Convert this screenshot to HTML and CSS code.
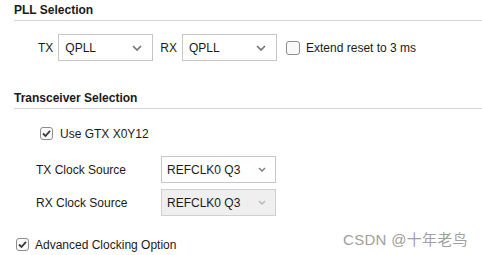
FILE: index.html
```html
<!DOCTYPE html>
<html lang="en">
<head>
  <meta charset="UTF-8" />
  <title>Transceiver Options</title>
  <link rel="stylesheet" href="styles.css">
</head>
<body>

  <div class="section">
    <h2 class="heading">PLL Selection</h2>
    <div class="pll-row">
      <span class="lbl-tx">TX</span>
      <div class="combo combo-pll">
        <span>QPLL</span>
        <svg class="chev" width="10" height="6" viewBox="0 0 10 6"><path d="M1 1 L5 5 L9 1" fill="none" stroke="#707070" stroke-width="1.6"/></svg>
      </div>
      <span class="lbl-rx">RX</span>
      <div class="combo combo-pll">
        <span>QPLL</span>
        <svg class="chev" width="10" height="6" viewBox="0 0 10 6"><path d="M1 1 L5 5 L9 1" fill="none" stroke="#707070" stroke-width="1.6"/></svg>
      </div>
      <span class="check check-extend"></span>
      <span>Extend reset to 3 ms</span>
    </div>
  </div>

  <div class="section section-trx">
    <h2 class="heading">Transceiver Selection</h2>
    <div class="check-row gtx-row">
      <span class="check">
        <svg width="11" height="11" viewBox="0 0 11 11"><path d="M2 5.5 L4.5 8 L9 2.8" fill="none" stroke="#3a3a3a" stroke-width="1.8"/></svg>
      </span>
      <span>Use GTX X0Y12</span>
    </div>
    <div class="clock-grid">
      <span>TX Clock Source</span>
      <div class="combo combo-clk">
        <span>REFCLK0 Q3</span>
        <svg class="chev" width="8" height="5" viewBox="0 0 8 5"><path d="M1 1 L4 4 L7 1" fill="none" stroke="#808080" stroke-width="1.5"/></svg>
      </div>
      <span>RX Clock Source</span>
      <div class="combo combo-clk combo-disabled">
        <span>REFCLK0 Q3</span>
        <svg class="chev" width="8" height="5" viewBox="0 0 8 5"><path d="M1 1 L4 4 L7 1" fill="none" stroke="#b8b8b8" stroke-width="1.5"/></svg>
      </div>
    </div>
  </div>

  <div class="check-row adv-row">
    <span class="check">
      <svg width="11" height="11" viewBox="0 0 11 11"><path d="M2 5.5 L4.5 8 L9 2.8" fill="none" stroke="#3a3a3a" stroke-width="1.8"/></svg>
    </span>
    <span>Advanced Clocking Option</span>
  </div>

  <div class="watermark">CSDN @十年老鸟</div>

</body>
</html>
```

FILE: styles.css
```css
body{
  margin:0;
  background:#fff;
  font-family:"Liberation Sans",Arial,sans-serif;
  font-size:12px;
  color:#1a1a1a;
  position:relative;
  height:255px;
  overflow:hidden
}
.section{padding-left:14px}
.heading{
  margin:3px 0 0;
  font-size:12px;
  line-height:14px;
  font-weight:bold;
  padding-bottom:3px;
  border-bottom:1px solid #d4d4d4
}
.section-trx .heading{margin-top:30px}
.pll-row{
  display:flex;
  align-items:center;
  height:27px;
  margin-top:13px;
  padding-left:24px
}
.lbl-tx{margin-right:5px}
.lbl-rx{margin:0 5px 0 7px}
.combo{
  box-sizing:border-box;
  height:27px;
  border:1px solid #c6c6c6;
  background:#fff;
  display:flex;
  align-items:center;
  justify-content:space-between
}
.combo-pll{width:95px;padding:0 10px 0 6px}
.combo-clk{width:115px;padding:0 9px 0 5px}
.combo-disabled{background:#efefef;border-color:#d0d0d0}
.check{
  box-sizing:border-box;
  width:13px;
  height:13px;
  border:1px solid #8c8c8c;
  border-radius:3px;
  background:#fafafa;
  display:inline-flex;
  align-items:center;
  justify-content:center;
  flex:none
}
.check-extend{width:14px;height:14px;margin:0 6px 0 9px}
.check-row{
  display:flex;
  align-items:center;
  height:13px;
  gap:7px
}
.gtx-row{margin-top:18px;padding-left:26px}
.clock-grid{
  display:grid;
  grid-template-columns:125px 115px;
  grid-auto-rows:27px;
  row-gap:6px;
  align-items:center;
  margin-top:16px;
  padding-left:22px
}
.adv-row{margin-top:22px;padding-left:16px;gap:6px}
.watermark{
  position:absolute;
  left:343px;
  top:228px;
  font-size:15px;
  letter-spacing:0.3px;
  color:#a0a0a0;
  font-family:"Liberation Sans","Noto Sans CJK SC",sans-serif
}
```
